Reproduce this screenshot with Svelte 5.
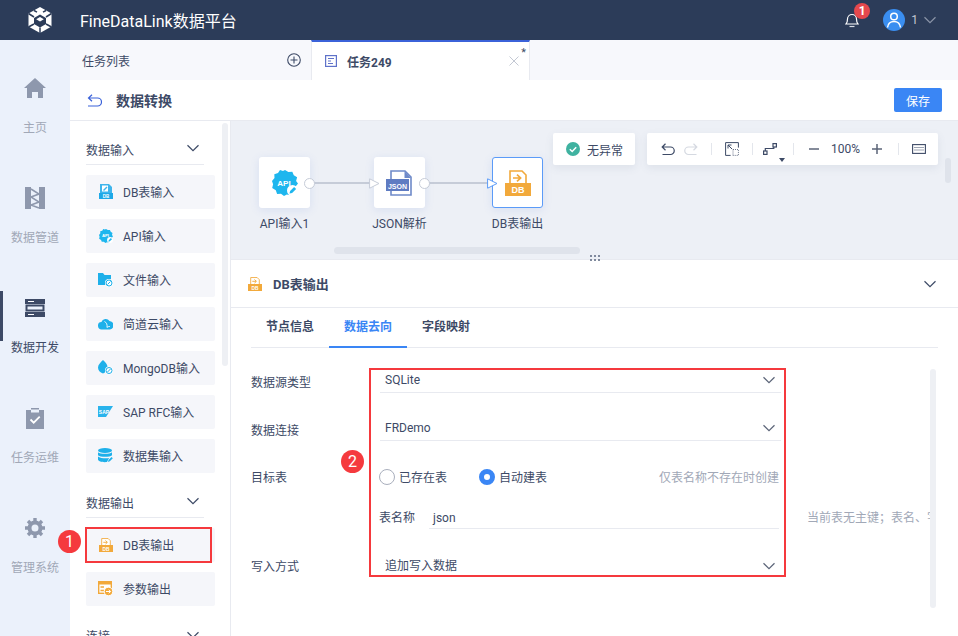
<script>
  const navItems = [
    { key: 'home', label: '主页' },
    { key: 'pipe', label: '数据管道' },
    { key: 'dev', label: '数据开发', active: true },
    { key: 'ops', label: '任务运维' },
    { key: 'gear', label: '管理系统' }
  ];
  const inputs = [
    { icon: 'db', label: 'DB表输入' },
    { icon: 'api', label: 'API输入' },
    { icon: 'file', label: '文件输入' },
    { icon: 'cloud', label: '简道云输入' },
    { icon: 'mongo', label: 'MongoDB输入' },
    { icon: 'sap', label: 'SAP RFC输入' },
    { icon: 'set', label: '数据集输入' }
  ];
  const outputs = [
    { icon: 'out', label: 'DB表输出' },
    { icon: 'param', label: '参数输出' }
  ];
  const nodeTabs = ['节点信息', '数据去向', '字段映射'];
</script>

{#snippet chevron(cls)}
  <svg class={cls} width="14" height="8" viewBox="0 0 14 8"><path d="M1.5 1.2 7 6.6l5.5-5.4" fill="none" stroke="currentColor" stroke-width="1.2"/></svg>
{/snippet}

{#snippet outIcon(w, h)}
  <svg width={w} height={h} viewBox="0 0 26 26">
    <path d="M5 1h12l4 4v9H5z" fill="#fff" stroke="#f2a93b" stroke-width="1.6"/>
    <path d="M8 8h7M12 4.6 15.6 8 12 11.4" fill="none" stroke="#f2a93b" stroke-width="1.7"/>
    <rect x="0" y="13" width="26" height="13" fill="#f2a93b"/>
    <text x="13" y="23.4" text-anchor="middle" class="svg-db">DB</text>
  </svg>
{/snippet}

{#snippet apiBlob(size)}
  <svg width={size} height={size} viewBox="0 0 26 26">
    <path d="M13 0l3.4 2 3.900-.3 1.500 3.500 3.300 2.100-1 3.700L26 13.500l-2.400 3 .4 3.800-3.600 1.500-1.800 3.400-3.800-.6L12 26l-3-2.300-3.900.2-1.300-3.600L.2 18l.9-3.800L0 11l2.500-2.900L2.300 4.300l3.700-1.200L8 0l3 1z" fill="#1eb6ee"/>
    <circle cx="20.500" cy="20.500" r="5.500" fill="#fff"/>
    <path d="M17.500 23.500l.6-2.600 4-4 2 2-4 4z" fill="#1eb6ee"/>
    <text x="12" y="15.500" text-anchor="middle" class="svg-api">API</text>
  </svg>
{/snippet}

{#snippet paletteIcon(name)}
  {#if name === 'db'}
    <svg width="14" height="15" viewBox="0 0 14 15"><path d="M1 0h9l3 3v12H1z" fill="#3fb5ec"/><rect x="3" y="1.500" width="6" height="6" fill="#fff"/><path d="M4 6l3.500-3.500 1 1L5 7z" fill="#3fb5ec"/><rect x="0" y="9" width="14" height="6" fill="#1ea9e8"/><text x="7" y="14" text-anchor="middle" class="svg-mini">DB</text></svg>
  {:else if name === 'api'}
    {@render apiBlob(14)}
  {:else if name === 'file'}
    <svg width="15" height="14" viewBox="0 0 15 14"><path d="M0 0h5l1.500 2H13v10H0z" fill="#1eb0ea"/><circle cx="11" cy="10" r="4" fill="#fff"/><circle cx="11" cy="10" r="3" fill="none" stroke="#1eb0ea"/><path d="M9.500 11.500l3-3" stroke="#1eb0ea"/></svg>
  {:else if name === 'cloud'}
    <svg width="15" height="12" viewBox="0 0 15 12"><path d="M4 11.500a3.700 3.700 0 0 1-.6-7.400A4.500 4.500 0 0 1 11.500 3a4.300 4.300 0 0 1 .5 8.500z" fill="#1eb0ea"/><path d="M6.500 3.500c2 1 3 3 2.500 6M9 9.500c1-1 2-1 3-1" fill="none" stroke="#fff" stroke-width=".9"/></svg>
  {:else if name === 'mongo'}
    <svg width="15" height="15" viewBox="0 0 15 15"><path d="M5 0c3 2.500 5 5 4.500 8.500C9 11 7 13 5 13.500 2 12.500 0 10.500 0 7.500 0 4.500 3 2 5 0z" fill="#1eb0ea"/><circle cx="11" cy="10.500" r="4" fill="#fff"/><circle cx="11" cy="10.500" r="3" fill="none" stroke="#1eb0ea"/><path d="M9.500 12l3-3" stroke="#1eb0ea"/></svg>
  {:else if name === 'sap'}
    <svg width="15" height="11" viewBox="0 0 15 11"><path d="M0 0h15L8 11H0z" fill="#29b3ec"/><text x="6" y="7.500" text-anchor="middle" class="svg-sap">SAP</text></svg>
  {:else if name === 'set'}
    <svg width="15" height="15" viewBox="0 0 15 15"><ellipse cx="7" cy="2.500" rx="7" ry="2.500" fill="#1eb0ea"/><path d="M0 4.200c2 2 12 2 14 0v3c-2 2-12 2-14 0z" fill="#1eb0ea"/><path d="M0 8.500c2 2 9 2 11 1.500l-2 4c-4 .5-9-.5-9-2.500z" fill="#1eb0ea"/><path d="M10 14l.5-2 3-3 1.300 1.300-3 3z" fill="#1eb0ea"/></svg>
  {:else if name === 'out'}
    {@render outIcon(14, 14)}
  {:else if name === 'param'}
    <svg width="15" height="15" viewBox="0 0 15 15"><rect x=".7" y=".7" width="12.600" height="11.600" fill="#fff" stroke="#f2a93b" stroke-width="1.400"/><rect x="0" y="0" width="14" height="3.500" fill="#f2a93b"/><path d="M2.500 6h3.500M2.500 9.500h3.500" stroke="#f2a93b" stroke-width="1.300"/><circle cx="10.500" cy="10.500" r="4.300" fill="#f2a93b" stroke="#fff"/><path d="M8 10.500h4.500M10.800 8.700l1.800 1.800-1.800 1.800" fill="none" stroke="#fff"/></svg>
  {/if}
{/snippet}

{#snippet navIcon(name)}
  {#if name === 'home'}
    <svg width="22" height="20" viewBox="0 0 22 20"><path d="M11 0 22 10h-3v10h-5v-6H8v6H3V10H0z" fill="#8e98ad"/></svg>
  {:else if name === 'pipe'}
    <svg width="20" height="22" viewBox="0 0 20 22"><rect x="0" y="0" width="6" height="22" fill="#8e98ad"/><rect x="14" y="0" width="6" height="22" fill="#8e98ad"/><path d="M6 2l8 5-8 3 8 5-8 3 8 3" fill="none" stroke="#8e98ad" stroke-width="1.600"/></svg>
  {:else if name === 'dev'}
    <svg width="20" height="18" viewBox="0 0 20 18"><rect x="0" y="0" width="20" height="5" fill="#3d4a66"/><rect x="0" y="13" width="20" height="5" fill="#3d4a66"/><rect x="1.500" y="6.500" width="17" height="5" fill="none" stroke="#3d4a66" stroke-width="2"/><path d="M3 2.500h6M3 15.500h6" stroke="#fff"/></svg>
  {:else if name === 'ops'}
    <svg width="18" height="21" viewBox="0 0 18 21"><path d="M0 2h5V0h8v2h5v19H0z" fill="#8e98ad"/><rect x="5" y="1.500" width="8" height="3" fill="#ebf1fb"/><path d="M4.500 11.500l3.200 3.200 6-6" fill="none" stroke="#fff" stroke-width="1.800"/></svg>
  {:else if name === 'gear'}
    <svg width="20" height="20" viewBox="0 0 20 20"><circle cx="10" cy="10" r="5.500" fill="none" stroke="#8e98ad" stroke-width="4"/><path d="M10 0v4M10 16v4M0 10h4M16 10h4M3 3l2.800 2.800M14.200 14.200 17 17M17 3l-2.800 2.800M5.800 14.200 3 17" stroke="#8e98ad" stroke-width="3.400"/></svg>
  {/if}
{/snippet}

<div class="app">
  <header class="topbar">
    <svg class="logo" width="24" height="26" viewBox="0 0 24 26">
      <path d="M12 0 23.500 6.500v13L12 26 .5 19.500v-13z" fill="#fff"/>
      <path d="M12 7.500 18 11v6l-6 3.500L6 17v-6z" fill="#2c3c59"/>
      <path d="M12 10 15.800 12.200 12 14.400 8.200 12.200z" fill="#fff"/>
      <path d="M6 3.500 9 5.200M18 3.500l-3 1.700M.5 6.500 6 10M23.500 6.500 18 10M6 17 .5 20M18 17l5.500 3M12 20.500V26" stroke="#2c3c59" stroke-width="1.500"/>
    </svg>
    <span class="brand">FineDataLink数据平台</span>
    <div class="top-right">
      <div class="bell">
        <svg width="14" height="16" viewBox="0 0 14 16"><path d="M1 12c1-1 1.500-2 1.500-5a4.500 4.500 0 0 1 9 0c0 3 .5 4 1.500 5z" fill="none" stroke="#fff" stroke-width="1.200"/><path d="M4.500 14.500h5" stroke="#d9dde5" stroke-width="1.200"/></svg>
        <span class="bell-count">1</span>
      </div>
      <span class="avatar">
        <svg width="22" height="22" viewBox="0 0 22 22"><circle cx="11" cy="7.500" r="3.300" fill="none" stroke="#fff" stroke-width="1.500"/><path d="M4.500 18.500c.5-4 3-6 6.500-6s6 2 6.500 6" fill="none" stroke="#fff" stroke-width="1.500"/></svg>
      </span>
      <span class="user">1</span>
      {@render chevron('user-chevron')}
    </div>
  </header>

  <div class="shell">
    <nav class="sidenav">
      {#each navItems as item}
        <div class="nav-item" class:active={item.active}>
          <span class="nav-icon">{@render navIcon(item.key)}</span>
          <span>{item.label}</span>
        </div>
      {/each}
    </nav>

    <main class="workspace">
      <div class="tabbar">
        <div class="tab-list">
          <span>任务列表</span>
          <svg width="14" height="14" viewBox="0 0 14 14"><circle cx="7" cy="7" r="6.300" fill="none" stroke="#3d4a66" stroke-width="1.100"/><path d="M3.500 7h7M7 3.500v7" stroke="#3d4a66" stroke-width="1.100"/></svg>
        </div>
        <div class="tab-current">
          <svg width="12" height="12" viewBox="0 0 12 12"><rect x=".6" y=".6" width="10.800" height="10.800" fill="none" stroke="#5f72c9" stroke-width="1.200"/><path d="M3 3.500h6M3 6h3M3 8.500h5" stroke="#5f72c9"/></svg>
          <b>任务249</b>
          <svg class="tab-close" width="10" height="10" viewBox="0 0 10 10"><path d="M.5.500l9 9M9.500.500l-9 9" stroke="#c3c8d3"/></svg>
          <span class="tab-dirty">*</span>
        </div>
      </div>

      <div class="titlebar">
        <svg width="15" height="13" viewBox="0 0 15 13"><path d="M5 .8 1.500 4 5 7.200M1.800 4h8.700a3.500 3.500 0 0 1 0 8H1" fill="none" stroke="#3b62d9" stroke-width="1.200"/></svg>
        <b>数据转换</b>
        <button class="save">保存</button>
      </div>

      <div class="content">
        <aside class="palette">
          <div class="palette-scroll"></div>
          <div class="group-head"><span>数据输入</span>{@render chevron('group-chevron')}</div>
          <div class="group-items">
            {#each inputs as item}
              <div class="node-btn"><span class="node-icon">{@render paletteIcon(item.icon)}</span>{item.label}</div>
            {/each}
          </div>
          <div class="group-head second"><span>数据输出</span>{@render chevron('group-chevron')}</div>
          <div class="group-items">
            {#each outputs as item}
              <div class="node-btn"><span class="node-icon">{@render paletteIcon(item.icon)}</span>{item.label}</div>
            {/each}
          </div>
          <div class="group-head third"><span>连接</span>{@render chevron('group-chevron')}</div>
          <div class="mark-box one"></div>
          <span class="mark-num one">1</span>
        </aside>

        <section class="editor">
          <div class="canvas">
            <div class="status">
              <svg width="14" height="14" viewBox="0 0 14 14"><circle cx="7" cy="7" r="7" fill="#3fb2a0"/><path d="M3.800 7.200 6.200 9.500l4-4.200" fill="none" stroke="#fff" stroke-width="1.500"/></svg>
              <span>无异常</span>
            </div>
            <div class="tools">
              <svg width="14" height="13" viewBox="0 0 14 13"><path d="M4.500 .8 1.200 4 4.500 7.200M1.500 4h8a3.500 3.500 0 0 1 0 7.500H1.500" fill="none" stroke="#3d4a66" stroke-width="1.200"/></svg>
              <svg class="gap-s" width="14" height="13" viewBox="0 0 14 13"><path d="M9.500 .8 12.800 4 9.500 7.200M12.500 4h-8a3.500 3.500 0 0 0 0 7.500h8" fill="none" stroke="#d5d9e1" stroke-width="1.200"/></svg>
              <i class="sep"></i>
              <svg width="14" height="14" viewBox="0 0 14 14"><path d="M.6 13.400V.6h12.800v5" fill="none" stroke="#3d4a66"/><path d="M.6 13.400h5" stroke="#3d4a66"/><path d="M3 3l4 4M3 6.500V3h3.500" fill="none" stroke="#3d4a66"/><path d="M8 7.500h5.400v5.900H7M8 7.500v5" fill="none" stroke="#6c768b" stroke-dasharray="1 1"/></svg>
              <i class="sep"></i>
              <span class="route">
                <svg width="14" height="12" viewBox="0 0 14 12"><rect x=".6" y="8" width="3.400" height="3.400" fill="none" stroke="#3d4a66" stroke-width="1.200"/><rect x="10" y=".6" width="3.400" height="3.400" fill="none" stroke="#3d4a66" stroke-width="1.200"/><path d="M2.300 8V5.500h8.500V4" fill="none" stroke="#3d4a66" stroke-width="1.200"/></svg>
                <i class="route-caret"></i>
              </span>
              <i class="sep"></i>
              <svg class="z-minus" width="10" height="2" viewBox="0 0 10 2"><path d="M0 1h10" stroke="#5b6478" stroke-width="1.500"/></svg>
              <span class="zoom-val">100%</span>
              <svg class="z-plus" width="10" height="10" viewBox="0 0 10 10"><path d="M0 5h10M5 0v10" stroke="#5b6478" stroke-width="1.500"/></svg>
              <i class="sep"></i>
              <svg width="14" height="10" viewBox="0 0 14 10"><rect x=".6" y=".6" width="12.800" height="8.800" fill="none" stroke="#3d4a66" stroke-width="1.100"/><path d="M2.500 3.500h9M2.500 6h9" stroke="#3d4a66" stroke-dasharray="1 1"/></svg>
            </div>

            <div class="edge e1"></div>
            <div class="edge e2"></div>

            <div class="flow-node n1">
              <div class="flow-box">{@render apiBlob(26)}</div>
              <span>API输入1</span>
            </div>
            <div class="flow-node n2">
              <div class="flow-box">
                <svg width="27" height="26" viewBox="0 0 27 26"><path d="M5 1h14l6 6v18H5z" fill="#fff" stroke="#6f8ac9" stroke-width="1.600"/><path d="M18.500 1v7h6.500" fill="#6f8ac9"/><rect x="0" y="9" width="23" height="12" fill="#5f7cc2"/><text x="11.500" y="18.500" text-anchor="middle" class="svg-json">JSON</text></svg>
              </div>
              <span>JSON解析</span>
            </div>
            <div class="flow-node n3">
              <div class="flow-box selected">{@render outIcon(26, 26)}</div>
              <span>DB表输出</span>
            </div>

            <i class="port p1"></i>
            <i class="port p2"></i>
            <svg class="arrow a1" width="11" height="11" viewBox="0 0 11 11"><path d="M.6.800 10 5.500.6 10.200z" fill="#fff" stroke="#c6ccd8"/></svg>
            <svg class="arrow a2" width="11" height="11" viewBox="0 0 11 11"><path d="M.6.800 10 5.500.6 10.200z" fill="#fff" stroke="#5b9bf8"/></svg>

            <div class="hscroll"></div>
            <div class="vscroll"></div>
          </div>

          <div class="splitter"><span></span></div>

          <div class="panel">
            <div class="panel-head">
              {@render outIcon(14, 14)}
              <b>DB表输出</b>
              {@render chevron('panel-chevron')}
            </div>
            <div class="panel-tabs">
              {#each nodeTabs as tab, i}
                <span class="panel-tab" class:on={i === 1}>{tab}</span>
              {/each}
            </div>

            <div class="form">
              <div class="field f-type">
                <label>数据源类型</label>
                <div class="select"><span>SQLite</span>{@render chevron('sel-chevron')}</div>
              </div>
              <div class="field f-conn">
                <label>数据连接</label>
                <div class="select"><span>FRDemo</span>{@render chevron('sel-chevron')}</div>
              </div>
              <div class="field f-target">
                <label>目标表</label>
                <div class="target">
                  <div class="radios">
                    <span class="radio"><i class="dot"></i>已存在表</span>
                    <span class="radio"><i class="dot on"></i>自动建表</span>
                    <span class="hint">仅表名称不存在时创建</span>
                  </div>
                  <div class="tablename">
                    <span class="tn-label">表名称</span>
                    <span class="tn-input">json</span>
                    <span class="tn-tip">当前表无主键；表名、字段名</span>
                  </div>
                </div>
              </div>
              <div class="field f-write">
                <label>写入方式</label>
                <div class="select plain"><span>追加写入数据</span>{@render chevron('sel-chevron')}</div>
              </div>
              <div class="form-scroll"></div>
              <div class="mark-box two"></div>
              <span class="mark-num two">2</span>
            </div>
          </div>
        </section>
      </div>
    </main>
  </div>
</div>

<style>
  :global(body) {
    margin: 0;
    overflow: hidden;
  }

  .app {
    width: 958px;
    height: 636px;
    display: flex;
    flex-direction: column;
    overflow: hidden;
    font-family: Roboto, "Noto Sans CJK SC", sans-serif;
    font-size: 12px;
    color: #3d4a66;
    background: #fff;
  }

  .app :global(.svg-db) { font: 700 9px "Liberation Sans", sans-serif; fill: #fff; }
  .app :global(.svg-api) { font: 700 8px "Liberation Sans", sans-serif; fill: #fff; }
  .app :global(.svg-mini) { font: 700 4.500px "Liberation Sans", sans-serif; fill: #fff; }
  .app :global(.svg-sap) { font: 700 5px "Liberation Sans", sans-serif; fill: #fff; }
  .app :global(.svg-json) { font: 700 7px "Liberation Sans", sans-serif; fill: #fff; }

  /* top bar */
  .topbar {
    height: 40px;
    flex: none;
    display: flex;
    align-items: center;
    background: #2c3c59;
    color: #fff;
  }
  .logo { margin-left: 28px; }
  .brand {
    margin-left: 28px;
    font-size: 16px;
    white-space: nowrap;
  }
  .top-right {
    margin-left: auto;
    display: flex;
    align-items: center;
    padding-right: 21px;
  }
  .bell {
    position: relative;
    display: flex;
    margin-right: 24px;
  }
  .bell-count {
    position: absolute;
    left: 9px;
    top: -9px;
    width: 16px;
    height: 16px;
    border-radius: 50%;
    background: #e5484d;
    text-align: center;
    line-height: 16px;
    font-size: 12px;
    font-weight: 700;
  }
  .avatar {
    width: 22px;
    height: 22px;
    border-radius: 50%;
    background: #3a8ef0;
    display: flex;
  }
  .user {
    margin-left: 6px;
    color: #c3c8d3;
    font-size: 12px;
  }
  .top-right :global(.user-chevron) {
    margin-left: 5px;
    color: #8b95a8;
  }

  .shell {
    flex: 1;
    display: flex;
    min-height: 0;
  }

  /* left nav */
  .sidenav {
    width: 70px;
    flex: none;
    padding-top: 37px;
    box-sizing: border-box;
    background: #ebf1fb;
    color: #a1a8b7;
  }
  .nav-item {
    height: 110px;
    display: flex;
    flex-direction: column;
    align-items: center;
    position: relative;
    box-sizing: border-box;
  }
  .nav-icon {
    height: 22px;
    display: flex;
    align-items: center;
    margin-bottom: 21px;
  }
  .nav-item span:last-child { line-height: 16px; }
  .nav-item.active { color: #3d4a66; }
  .nav-item.active::before {
    content: '';
    position: absolute;
    left: 0;
    top: -6px;
    width: 3px;
    height: 50px;
    background: #3d4a66;
  }

  .workspace {
    flex: 1;
    min-width: 0;
    display: flex;
    flex-direction: column;
  }

  /* tabs */
  .tabbar {
    height: 40px;
    flex: none;
    display: flex;
    background: #f7f8fc;
  }
  .tab-list {
    width: 241px;
    box-sizing: border-box;
    display: flex;
    align-items: center;
    justify-content: space-between;
    padding: 0 10px 0 12px;
  }
  .tab-current {
    width: 219px;
    box-sizing: border-box;
    position: relative;
    display: flex;
    align-items: center;
    padding-left: 13px;
    gap: 10px;
    background: #fff;
    border-top: 2px solid #3b62d9;
    border-left: 1px solid #e8eaf0;
    border-right: 1px solid #e8eaf0;
  }
  .tab-close { margin-left: auto; margin-right: 10px; }
  .tab-dirty {
    position: absolute;
    right: 3px;
    top: 4px;
    font-size: 11px;
  }

  .titlebar {
    height: 41px;
    flex: none;
    box-sizing: border-box;
    display: flex;
    align-items: center;
    padding: 0 16px 0 17px;
    border-bottom: 1px solid #e8eaf0;
  }
  .titlebar b {
    margin-left: 14px;
    font-size: 14px;
  }
  .save {
    margin-left: auto;
    width: 48px;
    height: 24px;
    padding: 0;
    border: 0;
    border-radius: 2px;
    background: #3a86f5;
    color: #fff;
    font: inherit;
    font-size: 12px;
  }

  .content {
    flex: 1;
    display: flex;
    min-height: 0;
  }

  /* palette */
  .palette {
    width: 161px;
    flex: none;
    position: relative;
    z-index: 2;
    box-sizing: border-box;
    padding: 15px 15px 0 16px;
    border-right: 1px solid #e8eaf0;
  }
  .palette-scroll {
    position: absolute;
    right: 2px;
    top: 2px;
    width: 6px;
    height: 243px;
    border-radius: 3px;
    background: #eef0f4;
  }
  .group-head {
    width: 118px;
    height: 29px;
    box-sizing: border-box;
    display: flex;
    justify-content: space-between;
    align-items: center;
    border-bottom: 1px solid #e8eaf0;
  }
  .group-head span { padding-bottom: 2px; }
  .group-head.second,
  .group-head.third { margin-top: 16px; }
  .group-head.third { border: 0; }
  .palette :global(.group-chevron) {
    margin: -4px 4px 0 0;
    color: #3d4a66;
  }
  .group-items {
    margin-top: 10px;
    display: flex;
    flex-direction: column;
    gap: 10px;
  }
  .node-btn {
    width: 129px;
    height: 34px;
    box-sizing: border-box;
    display: flex;
    align-items: center;
    padding: 0 0 1px 12px;
    border-radius: 2px;
    background: #f5f6fa;
    white-space: nowrap;
  }
  .node-icon {
    width: 15px;
    display: flex;
    justify-content: center;
    margin-right: 10px;
  }

  /* annotations */
  .mark-box {
    position: absolute;
    border: 2px solid #f5393d;
    box-sizing: border-box;
  }
  .mark-box.one {
    left: 15px;
    top: 406px;
    width: 127px;
    height: 36px;
  }
  .mark-num {
    position: absolute;
    width: 23px;
    height: 23px;
    border-radius: 50%;
    background: #f53a3e;
    color: #fff;
    text-align: center;
    line-height: 23px;
    font-size: 16px;
  }
  .mark-num.one {
    left: -12px;
    top: 409px;
  }

  /* canvas */
  .editor {
    flex: 1;
    min-width: 0;
    display: flex;
    flex-direction: column;
  }
  .canvas {
    height: 138px;
    flex: none;
    position: relative;
    background: #edf0f6;
  }
  .status, .tools {
    position: absolute;
    top: 12px;
    height: 32px;
    display: flex;
    align-items: center;
    background: #fff;
    border-radius: 2px;
    box-shadow: 0 3px 8px rgba(80, 95, 130, 0.1);
  }
  .status {
    left: 322px;
    width: 82px;
    box-sizing: border-box;
    padding-left: 13px;
    gap: 7px;
  }
  .tools {
    left: 416px;
    width: 291px;
    box-sizing: border-box;
    padding-left: 14px;
  }
  .gap-s { margin-left: 9px; }
  .sep {
    width: 1px;
    height: 12px;
    margin: 0 13px;
    background: #e3e6ec;
  }
  .route {
    position: relative;
    display: flex;
    margin: 0 3px 0 -3px;
  }
  .route-caret {
    position: absolute;
    left: 16px;
    top: 15px;
    border: 3px solid transparent;
    border-top: 4px solid #3d4a66;
    border-bottom: 0;
  }
  .z-minus { margin-left: 2px; }
  .zoom-val { margin: 0 12px; }
  .z-plus { margin-right: 3px; }

  .flow-node {
    position: absolute;
    top: 36px;
    width: 91px;
    display: flex;
    flex-direction: column;
    align-items: center;
    gap: 8px;
    white-space: nowrap;
    line-height: 16px;
  }
  .flow-node.n1 { left: 8px; }
  .flow-node.n2 { left: 123px; }
  .flow-node.n3 { left: 241px; }
  .flow-box {
    width: 51px;
    height: 51px;
    box-sizing: border-box;
    display: flex;
    align-items: center;
    justify-content: center;
    background: #fff;
    border-radius: 3px;
    box-shadow: 0 2px 10px rgba(90, 130, 220, 0.14);
  }
  .flow-box.selected { border: 1px solid #5b9bf8; }

  .edge {
    position: absolute;
    top: 61px;
    height: 2px;
    background: #c6ccd8;
  }
  .edge.e1 { left: 81px; width: 60px; }
  .edge.e2 { left: 196px; width: 62px; }
  .port {
    position: absolute;
    top: 57px;
    width: 9px;
    height: 9px;
    border: 1px solid #c6ccd8;
    border-radius: 50%;
    background: #fff;
    z-index: 1;
  }
  .port.p1 { left: 73px; }
  .port.p2 { left: 188px; }
  .arrow {
    position: absolute;
    top: 57px;
    z-index: 1;
  }
  .arrow.a1 { left: 138px; }
  .arrow.a2 { left: 256px; }
  .hscroll {
    position: absolute;
    left: 103px;
    top: 126px;
    width: 246px;
    height: 7px;
    border-radius: 4px;
    background: #dfe3eb;
  }
  .vscroll {
    position: absolute;
    left: 714px;
    top: 37px;
    width: 6px;
    height: 25px;
    border-radius: 3px;
    background: #dfe3eb;
  }
  .splitter {
    height: 1px;
    flex: none;
    position: relative;
    background: #e8eaf0;
  }
  .splitter span {
    position: absolute;
    left: 358px;
    top: -5px;
    width: 13px;
    height: 8px;
    background-image: radial-gradient(#7c869a 0.7px, transparent 0.9px);
    background-size: 4px 4px;
  }

  /* bottom panel */
  .panel {
    flex: 1;
    min-height: 0;
    overflow: hidden;
  }
  .panel-head {
    height: 48px;
    box-sizing: border-box;
    display: flex;
    align-items: center;
    padding: 0 21px 0 17px;
    border-bottom: 1px solid #e8eaf0;
  }
  .panel-head b {
    margin-left: 11px;
    font-size: 13px;
  }
  .panel :global(.panel-chevron) { margin-left: auto; }
  .panel-tabs {
    height: 40px;
    margin: 0 20px;
    box-sizing: border-box;
    display: flex;
    border-bottom: 1px solid #e8eaf0;
  }
  .panel-tab {
    width: 78px;
    text-align: center;
    line-height: 38px;
    font-weight: 700;
    height: 40px;
    box-sizing: border-box;
  }
  .panel-tab.on {
    color: #3a86f5;
    border-bottom: 2px solid #3a86f5;
  }

  .form {
    position: relative;
    padding: 20px 0 0 20px;
  }
  .field {
    display: flex;
    width: 530px;
  }
  .field label {
    width: 129px;
    flex: none;
    line-height: 16px;
    padding-top: 7px;
    box-sizing: border-box;
  }
  .select {
    width: 401px;
    height: 25px;
    box-sizing: border-box;
    display: flex;
    justify-content: space-between;
    padding: 4px 5px 0;
    line-height: 16px;
    border-bottom: 1px solid #e8eaf0;
  }
  .select.plain {
    padding-top: 5px;
    border-color: transparent;
  }
  .panel :global(.sel-chevron) {
    margin-top: 4px;
    color: #5b6478;
  }
  .f-type { height: 47px; }
  .f-conn { height: 26px; }
  .f-conn label { padding-top: 8px; }
  .f-conn .select {
    height: 26px;
    padding-top: 5px;
  }
  .f-target { height: 112px; }
  .f-target .target { margin-left: -1px; }
  .f-target label { padding-top: 29px; }
  .f-write label { padding-top: 6px; }
  .target { width: 400px; }
  .radios {
    height: 47px;
    margin-top: 12px;
    margin-bottom: 1px;
    display: flex;
    align-items: center;
    white-space: nowrap;
  }
  .radio {
    display: flex;
    align-items: center;
    gap: 4px;
    margin-right: 32px;
  }
  .dot {
    width: 16px;
    height: 16px;
    box-sizing: border-box;
    border: 1px solid #a9afbd;
    border-radius: 50%;
  }
  .dot.on { border: 5px solid #3a86f5; }
  .hint {
    margin-left: auto;
    color: #a1a8b7;
  }
  .tablename {
    height: 31px;
    display: flex;
    align-items: center;
    position: relative;
    white-space: nowrap;
  }
  .tn-input {
    width: 350px;
    height: 25px;
    margin-left: 14px;
    box-sizing: border-box;
    padding: 6px 0 0 4px;
    line-height: 16px;
    border-bottom: 1px solid #e8eaf0;
  }
  .tn-tip {
    position: absolute;
    left: 428px;
    top: 9px;
    width: 123px;
    overflow: hidden;
    line-height: 16px;
    color: #a1a8b7;
  }
  .form-scroll {
    position: absolute;
    left: 699px;
    top: 21px;
    width: 6px;
    height: 239px;
    border-radius: 3px;
    background: #eef0f4;
  }
  .mark-box.two {
    left: 138px;
    top: 20px;
    width: 417px;
    height: 209px;
  }
  .mark-num.two {
    left: 110px;
    top: 102px;
  }
</style>
